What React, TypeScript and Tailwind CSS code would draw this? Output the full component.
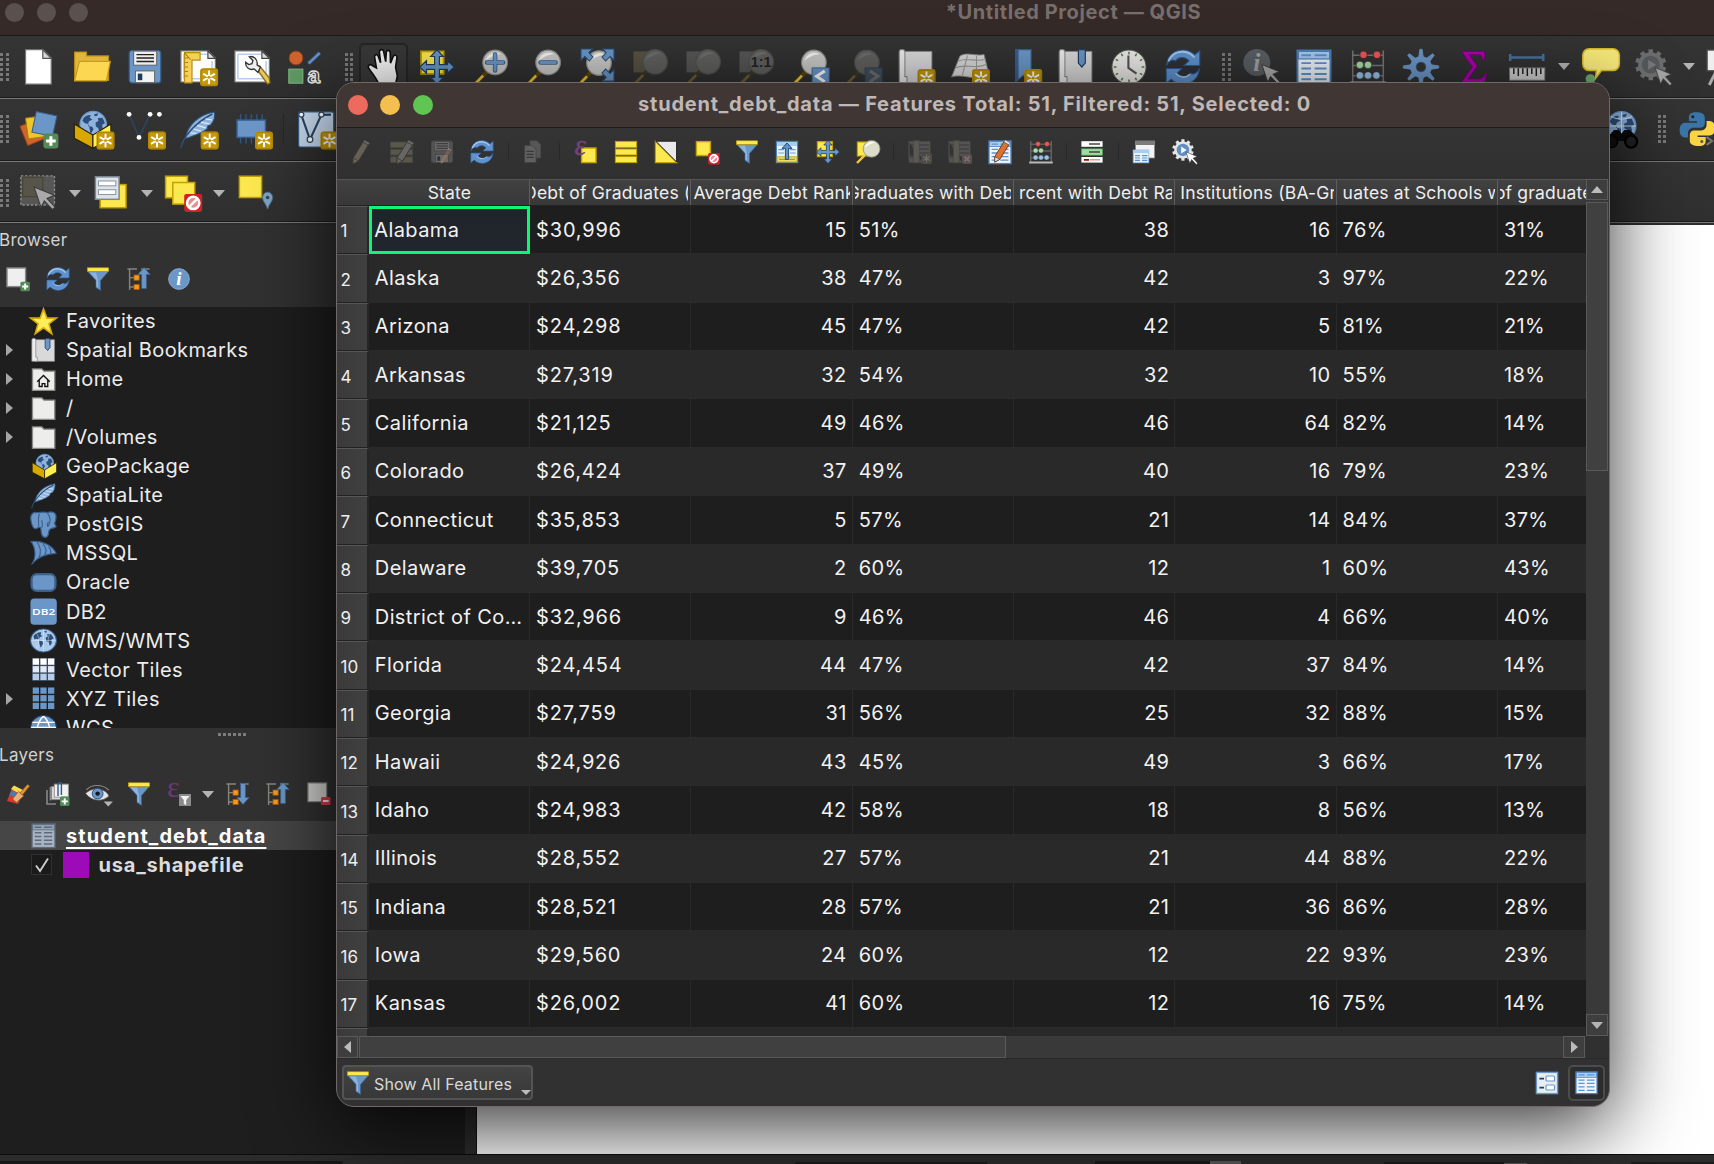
import React from 'react';

type Kids = { children?: React.ReactNode };

/* ---------- icon helpers ---------- */

const Svg = ({ s = 36, children, dim }: Kids & { s?: number; dim?: boolean }) => (
  <svg width={s} height={s} viewBox="0 0 24 24" className={dim ? 'shrink-0 overflow-visible opacity-30' : 'shrink-0 overflow-visible'}>
    {children}
  </svg>
);

const Badge = ({ x = 13, y = 13.5 }: { x?: number; y?: number }) => (
  <g transform={`translate(${x} ${y})`}>
    <rect width="12" height="12" rx="2" fill="#c59a0b" />
    <rect x=".6" y=".6" width="10.8" height="10.8" rx="1.6" fill="none" stroke="#a57e02" strokeWidth=".6" />
    <g stroke="#fff" strokeWidth="1.3" strokeLinecap="round">
      <path d="M6 2V10M2.5 4L9.5 8M9.5 4L2.5 8" />
    </g>
    <circle cx="6" cy="6" r="1" fill="#c59a0b" />
  </g>
);

const Plus = ({ x = 15, y = 15, s = 1 }: { x?: number; y?: number; s?: number }) => (
  <g transform={`translate(${x} ${y}) scale(${s})`}>
    <rect width="10" height="10" rx="1.6" fill="#548a57" />
    <path d="M5 1.8V8.2M1.8 5H8.2" stroke="#fff" strokeWidth="2" />
  </g>
);

const Forbid = ({ x = 13, y = 13, s = 1 }: { x?: number; y?: number; s?: number }) => (
  <g transform={`translate(${x} ${y}) scale(${s})`}>
    <rect width="12" height="12" rx="1.4" fill="#d11f2b" />
    <circle cx="6" cy="6" r="4.1" fill="#e88a8f" stroke="#fff" strokeWidth="1.7" />
    <path d="M3.3 8.7L8.7 3.3" stroke="#fff" strokeWidth="1.7" />
  </g>
);

const Cursor = ({ fill = '#a9a9a9', x = 0, y = 0, s = 1 }: { fill?: string; x?: number; y?: number; s?: number }) => (
  <path transform={`translate(${x} ${y}) scale(${s})`} d="M0 0L13.5 5.5L8.6 7.6L14 13.5L12.3 15L6.8 9.2L4.6 13.6Z" fill={fill} stroke="#3a3a3a" strokeWidth=".7" />
);

const Caret = () => <span className="h-0 w-0 border-x-[6px] border-t-[7px] border-x-transparent border-t-[#b4b4b4]" />;

/* ---------- icons ---------- */

const NewPage = () => (
  <Svg>
    <path d="M3.7.5H15.5L20.8 6V23.4H3.7Z" fill="#fff" stroke="#777" strokeWidth=".8" />
    <path d="M15.2.5V6.2H20.8Z" fill="#d6d6d6" stroke="#555" strokeWidth=".8" />
  </Svg>
);

const Folder = () => (
  <Svg>
    <path d="M.4 21V2H8.3V4.6H23V21Z" fill="#e0b73c" stroke="#b98c14" strokeWidth=".8" />
    <path d="M.4 21.2L3.6 8.2H24.2L21.6 21.2Z" fill="#fcd852" stroke="#c99a1c" strokeWidth=".8" />
  </Svg>
);

const Save = ({ s = 36, dim }: { s?: number; dim?: boolean }) => (
  <Svg s={s} dim={dim}>
    <rect x="1.5" y="1" width="21" height="21.6" rx="2" fill={dim ? '#a0a0a0' : '#6b97c8'} stroke={dim ? '#888' : '#395f8c'} strokeWidth=".8" />
    <rect x="4.4" y="1.4" width="15.4" height="9.4" fill="#eee" stroke="#666" strokeWidth=".7" />
    <path d="M6.3 3.7H18M6.3 6H18M6.3 8.3H18" stroke="#222" strokeWidth=".9" />
    <rect x="5.6" y="14.6" width="12.8" height="7.8" fill="#f3f3f3" stroke="#666" strokeWidth=".7" />
    <rect x="7.2" y="16.4" width="3" height="4.4" fill="#1d3b5c" />
  </Svg>
);

const LayoutPage = () => (
  <>
    <path d="M.6 1.3H18.8L23.6 6V22H.6Z" fill="#fff" stroke="#777" strokeWidth=".8" />
    <path d="M2.6 3.5H18M2.6 19.8H21.4M2.6 3.5V19.8M21.4 8V19.8" fill="none" stroke="#b7cdee" strokeWidth="1" />
    <path d="M18.6 1.3V6.2H23.6Z" fill="#ddd" stroke="#444" strokeWidth=".8" />
  </>
);

const NewLayout = () => (
  <Svg>
    <LayoutPage />
    <path d="M3 2.4H13.4V7.4H8V22.6H3Z" fill="#f6d156" stroke="#b98c14" strokeWidth=".8" />
    <path d="M3.4 6H5.4M3.4 9H5.4M3.4 12H5.4M3.4 15H5.4M3.4 18H5.4M7 7L3 2.6" stroke="#a57e02" strokeWidth=".7" />
    <Badge x={13.4} y={12.8} />
  </Svg>
);

const LayoutManager = () => (
  <Svg>
    <LayoutPage />
    <path d="M15 13L22.4 23.4L24 22.4L23.4 19.2L17.2 11.4Z" fill="#e9c85e" stroke="#8c6c14" strokeWidth=".9" />
    <path d="M7.8 8.8C7.4 12.5 10.6 14.4 13.4 13.3L16 15.6L17.6 12.2L15.4 10.6C16 7 13.2 4.4 10.2 5.2L12.6 7.6L12 9.8L9.8 10.4Z" fill="#eee" stroke="#333" strokeWidth=".9" />
  </Svg>
);

const StyleManager = () => (
  <Svg>
    <circle cx="6" cy="6" r="4.6" fill="#d0642e" stroke="#8c3d14" strokeWidth=".6" />
    <path d="M14.4 9.6L21.8 2.6" stroke="#395f8c" strokeWidth="2.6" />
    <path d="M14.4 9.6L21.8 2.6" stroke="#6b97c8" strokeWidth="1.4" />
    <rect x="1.2" y="13.4" width="9.4" height="9.4" fill="#5f9a63" stroke="#8ac18d" strokeWidth=".6" />
    <text x="13.6" y="22.6" fontFamily="Liberation Sans" fontWeight="700" fontSize="15" fill="#333" stroke="#e8e8e8" strokeWidth=".9">a</text>
  </Svg>
);

const Hand = () => (
  <Svg>
    <path d="M5.6 12.6L4.4 5.4C4.2 3.6 6.2 3.2 6.8 4.8L8.4 9.2L7.6 2C7.6.2 10-.2 10.4 1.6L11.8 8.4L12.2 2.2C12.4.4 14.6.6 14.8 2.4L15 9.4L16.8 5C17.6 3.4 19.6 4 19.3 5.8L18.4 12.2L19.6 18L17.8 26H8.2C7 21 2.8 16.6.4 12.6C-.4 10.8 1.6 9.8 2.8 11Z" transform="translate(2 0)" fill="#f4f4f4" stroke="#111" strokeWidth="1.1" />
  </Svg>
);

const Arrows4 = () => (
  <path d="M12 .5L16.2 5H13.6V10.4H19V7.8L23.5 12L19 16.2V13.6H13.6V19H16.2L12 23.5L7.8 19H10.4V13.6H5V16.2L.5 12L5 7.8V10.4H10.4V5H7.8Z" fill="#6b97c8" stroke="#1f3f63" strokeWidth=".8" />
);

const PanSel = ({ s = 36 }: { s?: number }) => (
  <Svg s={s}>
    <rect x="1.4" y="1.6" width="15" height="15" fill="#fce94f" stroke="#c4a000" strokeWidth="1.2" />
    <Arrows4 />
  </Svg>
);

const Lens = ({ cx = 15, cy = 9 }: { cx?: number; cy?: number }) => (
  <>
    <path d={`M${cx - 5.4} ${cy + 6.2}L${cx - 14.4} ${cy + 15.4}`} stroke="#5c4508" strokeWidth="2.6" />
    <path d={`M${cx - 8} ${cy + 8.8}L${cx - 14} ${cy + 15}`} stroke="#f3c847" strokeWidth="1.7" />
    <circle cx={cx} cy={cy} r="8.2" fill="#c9c9c7" stroke="#8f8f8c" strokeWidth=".8" />
    <path d={`M${cx - 6.4} ${cy - 1}A7 7 0 0 1 ${cx + 4} ${cy - 5.6}C${cx - 1} ${cy - 5} ${cx - 4} ${cy - 3} ${cx - 6.4} ${cy - 1}Z`} fill="#f5f5f3" />
  </>
);

const ZoomIn = () => (
  <Svg>
    <Lens cx={15.4} />
    <path d="M15.4 3.6V14.4M10 9H20.8" stroke="#395f8c" strokeWidth="3" strokeLinecap="round" />
    <path d="M15.4 3.8V14.2M10.2 9H20.6" stroke="#6b97c8" strokeWidth="1.9" strokeLinecap="round" />
  </Svg>
);
const ZoomOut = () => (
  <Svg>
    <Lens cx={15.4} />
    <path d="M10.4 9H20.4" stroke="#395f8c" strokeWidth="3" strokeLinecap="round" />
    <path d="M10.6 9H20.2" stroke="#6b97c8" strokeWidth="1.9" strokeLinecap="round" />
  </Svg>
);
const ZoomFull = () => (
  <Svg>
    <Lens cx={14} cy={9.4} />
    <g fill="#6b97c8" stroke="#2c4f7a" strokeWidth=".7">
      <path d="M2 0H9.6L7.2 2.4L10 5.4L7.6 8L4.6 5L2 7.6Z" />
      <path d="M24 0H16.4L18.8 2.4L16 5.4L18.4 8L21.4 5L24 7.6Z" />
      <path d="M24 21.4H16.4L18.8 19L16 16L18.4 13.4L21.4 16.4L24 13.8Z" />
    </g>
  </Svg>
);
const ZoomDim = ({ fill, label }: { fill: string; label?: string }) => (
  <Svg dim>
    <rect x="1" y="1.6" width="10" height="14" fill={fill} />
    <Lens cx={15.4} cy={8.6} />
    {label && <text x="15.4" y="12" textAnchor="middle" fontFamily="Liberation Sans" fontWeight="700" fontSize="9.6" fill="#000">{label}</text>}
  </Svg>
);
const ZoomStep = ({ dir, dim }: { dir: string; dim?: boolean }) => (
  <Svg dim={dim}>
    <Lens cx={14.6} />
    <rect x="13.4" y="12.6" width="11.4" height="11.4" fill="#6b97c8" stroke="#395f8c" strokeWidth=".6" />
    <path d={dir === 'left' ? 'M21.8 14.6L16.4 18.2L21.8 21.8' : 'M16.6 14.6L22 18.2L16.6 21.8'} fill="none" stroke="#fff" strokeWidth="2" />
  </Svg>
);

const MapSheet = () => (
  <>
    <path d="M4 1.6H22.6V22.4H4Z" fill="#d9d9d9" stroke="#8a8a8a" strokeWidth=".6" />
    <path d="M.8 2C.8-.2 4.6-.2 4.6 2V18.4H6V22.4H.8Z" fill="#ededed" stroke="#8a8a8a" strokeWidth=".7" />
  </>
);
const NewMap = () => (
  <Svg><MapSheet /><Badge x={13} y={13.4} /></Svg>
);
const New3D = () => (
  <Svg>
    <path d="M.4 18.6L6 4.6C11 1.6 17 5.2 22 3.6L25 16C20 23 8 16 .4 18.6Z" fill="#d9d9d9" stroke="#888" strokeWidth=".6" />
    <path d="M3 12.5C10 9.4 17 14 24 10M5 8C11 5 17 9.4 23 6.6M11 4.2L7.6 17.4M17 4.6V18" fill="none" stroke="#999" strokeWidth=".7" />
    <Badge x={14} y={13.4} />
  </Svg>
);
const NewBookmark = () => (
  <Svg>
    <path d="M7 .4H17.4V22L12.2 17.6L7 22Z" fill="#6b97c8" stroke="#395f8c" strokeWidth=".7" />
    <path d="M7 .4H9V20.4L7 22Z" fill="#395f8c" />
    <Badge x={12.8} y={13.4} />
  </Svg>
);
const Bookmarks = ({ s = 36 }: { s?: number }) => (
  <Svg s={s}>
    <MapSheet />
    <path d="M13.6.4H18.2V9.4L15.9 12L13.6 9.4Z" fill="#6b97c8" stroke="#1f3f63" strokeWidth=".8" />
  </Svg>
);
const Clock = () => (
  <Svg>
    <circle cx="12" cy="12" r="11.4" fill="#ecebe7" stroke="#555" strokeWidth=".7" />
    {Array.from({ length: 12 }, (_, i) => (
      <path key={i} d="M12 1.8V3.6" stroke="#4f7a4f" strokeWidth="1" transform={`rotate(${i * 30} 12 12)`} />
    ))}
    <path d="M11.6 4.4V12.6L17 16.4" fill="none" stroke="#555" strokeWidth="1.4" />
  </Svg>
);
const Refresh = ({ s = 36 }: { s?: number }) => (
  <Svg s={s}>
    <path d="M1 11C1.6 3.6 7 .6 12 .6C15.6.6 18 2 19.8 3.9L23.2 1.2V11H12.8L16 7.8C13 4.8 9 5.2 7 8C5 6.4 2.4 8 1 11Z" fill="#5f93cf" stroke="#2c5a92" strokeWidth=".7" />
    <path d="M2.4 8C4.4 3 9 1.6 12.4 1.8C15 2 17.4 3 19.6 5.6" fill="none" stroke="#a9c8ea" strokeWidth="1.3" />
    <g transform="rotate(180 12 12)">
      <path d="M1 11C1.6 3.6 7 .6 12 .6C15.6.6 18 2 19.8 3.9L23.2 1.2V11H12.8L16 7.8C13 4.8 9 5.2 7 8C5 6.4 2.4 8 1 11Z" fill="#5f93cf" stroke="#2c5a92" strokeWidth=".7" />
      <path d="M7.4 7.2C10 4.6 13.4 4.6 17 7.8" fill="none" stroke="#a9c8ea" strokeWidth="1" />
    </g>
  </Svg>
);
const Identify = () => (
  <Svg>
    <circle cx="9.2" cy="9" r="9" fill="#5a5f63" />
    <text x="9.2" y="14.6" textAnchor="middle" fontFamily="Liberation Serif" fontStyle="italic" fontWeight="700" fontSize="17" fill="#a3a3a3">i</text>
    <Cursor x={12.6} y={10.4} s={0.85} />
  </Svg>
);
const Table = ({ s = 36, dim, gray }: { s?: number; dim?: boolean; gray?: boolean }) => (
  <Svg s={s} dim={dim}>
    <rect x="1" y="1" width="22" height="22.6" fill={gray ? '#a9b4c0' : '#eef4fb'} stroke={gray ? '#5c6c7e' : '#4f82bd'} strokeWidth="1.3" />
    <rect x="1.6" y="1.6" width="20.8" height="5" fill={gray ? '#93a4b6' : '#a8cdf0'} stroke={gray ? '#5c6c7e' : '#4f82bd'} strokeWidth=".8" />
    <path d="M3.6 4.1H10M12.4 4.1H20.4M3.6 9.4H10M12.4 9.4H20.4M3.6 13H10M12.4 13H20.4M3.6 16.6H10M12.4 16.6H20.4M3.6 20.2H10M12.4 20.2H20.4" stroke={gray ? '#5c6c7e' : '#5f93cf'} strokeWidth="1.3" />
  </Svg>
);
const Abacus = ({ s = 36 }: { s?: number }) => (
  <Svg s={s}>
    <path d="M1.8 1V22M22.2 1V22M1.8 4.2H22.2M1.8 11H22.2M1.8 17.8H22.2" stroke="#777" strokeWidth="1" />
    <path d="M.2 22.6H23.8" stroke="#b9b9b9" strokeWidth="2" />
    <g strokeWidth=".4" stroke="#222">
      <circle cx="9" cy="3.9" r="2.5" fill="#ef5757" /><circle cx="18" cy="3.9" r="2.5" fill="#ef5757" />
      <circle cx="6.6" cy="10.6" r="2.5" fill="#a8dba8" /><circle cx="12" cy="10.6" r="2.5" fill="#a8dba8" />
      <circle cx="6.6" cy="17.6" r="2.5" fill="#9cc3e6" /><circle cx="12" cy="17.6" r="2.5" fill="#9cc3e6" /><circle cx="17.6" cy="17.6" r="2.5" fill="#9cc3e6" />
    </g>
  </Svg>
);
const GearBlue = () => (
  <Svg>
    {Array.from({ length: 8 }, (_, i) => (
      <path key={i} d="M10.4 6L11.3.2H12.7L13.6 6Z" fill="#6b97c8" stroke="#6b97c8" strokeWidth=".6" transform={`rotate(${i * 45} 12 12)`} />
    ))}
    <circle cx="12" cy="12" r="5.2" fill="none" stroke="#6b97c8" strokeWidth="4" />
    <circle cx="12" cy="12" r="3.2" fill="#333" stroke="#395f8c" strokeWidth=".5" />
  </Svg>
);
const Sigma = () => (
  <Svg>
    <path d="M4.4 1.6H19V7H17.8C17.4 4.4 16.4 3.6 14 3.6H8.6L14.2 11.4L8 20H14.6C17.4 20 18.6 19 19.4 16.4H20.4L19.4 22.4H4V21.4L11 12L4.4 2.6Z" fill="#b000b0" stroke="#76007a" strokeWidth=".6" />
  </Svg>
);
const Ruler = () => (
  <Svg>
    <path d="M.8 3.4V8M22.8 3.4V8M.8 5.7H22.8" stroke="#46729f" strokeWidth="1.7" />
    <rect x=".3" y="12.6" width="23.6" height="8.2" fill="#cfcfcf" stroke="#777" strokeWidth=".6" />
    <path d="M3.2 12.8V16.6M6.2 12.8V18M9.2 12.8V16.6M12.2 12.8V18M15.2 12.8V16.6M18.2 12.8V18M21.2 12.8V16.6" stroke="#222" strokeWidth="1" />
  </Svg>
);
const Tip = () => (
  <Svg>
    <circle cx="5.6" cy="20" r="3.2" fill="#6fa56f" />
    <path d="M4.9-.2H20.5C23-.2 24.9 1.8 24.9 4.2V10C24.9 12.4 23 14.4 20.5 14.4H13L9 19.6L9.6 14.4H4.9C2.4 14.4.5 12.4.5 10V4.2C.5 1.8 2.4-.2 4.9-.2Z" fill="#f7e97a" stroke="#d7b92b" strokeWidth="1" />
  </Svg>
);
const Gear = ({ s = 36, body, inner, cur, play }: { s?: number; body: string; inner: string; cur: string; play: string }) => (
  <Svg s={s}>
    {Array.from({ length: 10 }, (_, i) => (
      <rect key={i} x="9" y=".2" width="3" height="4" fill={body} transform={`rotate(${i * 36} 10.5 10.5)`} />
    ))}
    <circle cx="10.5" cy="10.5" r="8.4" fill={body} />
    <circle cx="10.5" cy="10.5" r="6" fill={inner} />
    <path d="M8.8 7.2L14 10.5L8.8 13.8Z" fill={play} />
    <Cursor x={13.4} y={12.4} s={0.8} fill={cur} />
  </Svg>
);
const Board = () => (
  <Svg>
    <rect x="0" y=".6" width="24" height="14" fill="#eee" stroke="#444" strokeWidth="1" />
    <path d="M6 15L1.5 24" stroke="#aaa" strokeWidth="2" />
  </Svg>
);

const AddLayers = () => (
  <Svg>
    <rect x="2" y="7" width="14" height="14" fill="#d0642e" stroke="#8c3d14" strokeWidth=".6" transform="rotate(-22 9 14)" />
    <rect x="4.6" y="3.8" width="14" height="14" fill="#f0c52c" stroke="#a57e02" strokeWidth=".6" transform="rotate(-8 11 11)" />
    <rect x="9.4" y="1.6" width="14" height="14" fill="#6b97c8" stroke="#395f8c" strokeWidth=".7" transform="rotate(12 16 8)" />
    <Plus x={15.6} y={15} />
  </Svg>
);
const Globe = ({ cx, cy, r }: { cx: number; cy: number; r: number }) => (
  <g transform={`translate(${cx} ${cy}) scale(${r / 9})`}>
    <circle r="9" fill="#8fb3dc" stroke="#6b97c8" strokeWidth=".8" />
    <path d="M-7.4-2.6C-6.4-5.4-4-6.6-1.6-6.4L-2.4-4.6L-.6-3.4L-3-2L-3.4-.4L-5.6-.8ZM-3.6 1L-.6 1.6L.2 3.2L-1.8 6.6L-3-.2ZM.6-7L3.4-7.6L2.8-6L1-5.6ZM3.2-4.4L6.4-4.6L8-1L6 .4L6.6 3L4.4 5.6L3.4 2.4L1.8 1.4L1.6-1.4L3.6-2.4Z" fill="#2c4f7a" />
  </g>
);
const GeoPackage = ({ s = 36, badge }: { s?: number; badge?: boolean }) => (
  <Svg s={s}>
    <Globe cx={12.8} cy={9} r={8.8} />
    <path d="M.2 8.6L12.6 16V24.8L.2 18.2Z" fill="#d8a800" stroke="#2b2200" strokeWidth=".8" />
    <path d="M24.6 8.6L12.6 16V24.8L24.6 18.2Z" fill="#fff04f" stroke="#2b2200" strokeWidth=".8" />
    {badge && <Badge x={15} y={13.6} />}
  </Svg>
);
const Shapefile = () => (
  <Svg>
    <path d="M1.4 2.2L8 17.6L15.4 2.2" fill="none" stroke="#2c4560" strokeWidth="1" />
    <circle cx="1.4" cy="2.2" r="1.6" fill="#fff" /><circle cx="15.4" cy="2.2" r="1.6" fill="#fff" /><circle cx="21.6" cy="2.2" r="1.6" fill="#fff" /><circle cx="8" cy="17.6" r="1.6" fill="#fff" />
    <Badge x={14} y={13.6} />
  </Svg>
);
const Feather = ({ s = 36, badge }: { s?: number; badge?: boolean }) => (
  <Svg s={s}>
    <path d="M3.6 18.4C5 9.6 12 2.4 23 .6C23.6 4 22.4 7 20.4 9.4L18.6 9.8L18 12C13.6 15.6 8.6 16.6 3.6 18.4Z" fill="#8fb3dc" stroke="#2c4f7a" strokeWidth=".7" />
    <path d="M.6 24.4C2 18 9 8.4 21.6 2" fill="none" stroke="#2c4f7a" strokeWidth="1" />
    <path d="M7 14.6L11 15M9 12L14 13.4M11.4 9.6L17 11.2M14 7.4L19.4 8.6M17 5.2L21.4 6" stroke="#dbe9f8" strokeWidth=".8" />
    {badge && <Badge x={13.8} y={13.6} />}
  </Svg>
);
const Chip = () => (
  <Svg>
    <path d="M4.4 2.2V21.6M8 2.2V21.6M11.6 2.2V21.6M15.2 2.2V21.6M18.8 2.2V21.6" stroke="#2f5580" strokeWidth="1" />
    <rect x="2" y="6" width="19" height="11.6" fill="#6b97c8" stroke="#395f8c" strokeWidth="1" />
    <Badge x={14} y={13.6} />
  </Svg>
);
const Virtual = () => (
  <Svg>
    <rect x=".4" y=".6" width="23.4" height="23.4" rx="1.4" fill="#c9dcf2" stroke="#395f8c" strokeWidth=".8" />
    <path d="M2.2 2.6L8 19L15.6 2.6L22 2.4" fill="none" stroke="#2c4560" strokeWidth="1.4" />
    <g fill="#fff" stroke="#2c4560" strokeWidth=".8"><circle cx="2.2" cy="2.4" r="1.7" /><circle cx="8" cy="19" r="1.9" /><circle cx="15.6" cy="2.4" r="1.7" /></g>
    <Badge x={15} y={13.6} />
  </Svg>
);
const MetaSearch = () => (
  <Svg>
    <Globe cx={13} cy={10} r={9.6} />
    <path d="M13 .4V20M3.6 10H22.6M6 3.6C10 6 16 6 20 3.6" stroke="#dbe9f8" strokeWidth=".6" fill="none" />
    <path d="M5 16L8 12.6H11L13 15L15 12.6H18.6L22 16V20H5Z" fill="#0a0a0a" />
    <circle cx="6.4" cy="20.4" r="4" fill="#111" stroke="#000" strokeWidth="1" /><circle cx="19.4" cy="20.4" r="4" fill="#222" stroke="#000" strokeWidth="1.6" />
  </Svg>
);
const Python = () => (
  <Svg>
    <path d="M11.4.8C7.4.8 6.6 2.4 6.6 4.2V6.8H12V7.8H4.2C1.6 7.8.4 10 .4 12.8C.4 15.8 2 17.6 4 17.6H6V14.8C6 12.8 7.6 11.2 9.6 11.2H14.4C16 11.2 17.2 9.8 17.2 8.4V4.2C17.2 2 14.8.8 11.4.8Z" fill="#3b76a8" />
    <path d="M13 23.4C17 23.4 17.8 21.8 17.8 20V17.4H12.4V16.4H20.2C22.8 16.4 24 14.2 24 11.4C24 8.4 22.4 6.6 20.4 6.6H18.4V9.4C18.4 11.4 16.8 13 14.8 13H10C8.4 13 7.2 14.4 7.2 15.8V20C7.2 22.2 9.6 23.4 13 23.4Z" fill="#fcd545" />
    <circle cx="9.2" cy="3.8" r="1" fill="#222" /><circle cx="15.2" cy="20.4" r="1" fill="#555" />
    <path d="M18.4 17.4L22 20L18.4 22.6" fill="none" stroke="#777" strokeWidth="1.4" />
  </Svg>
);

const SelectTool = () => (
  <Svg>
    <rect x=".6" y=".6" width="22.4" height="19.4" fill="#565656" stroke="#8d8d8d" strokeWidth=".9" strokeDasharray="1.6 1.2" />
    <rect x="1.8" y="1.4" width="13.4" height="13" fill="#57544a" stroke="#474433" strokeWidth=".8" />
    <Cursor x={9.4} y={8} s={1} />
  </Svg>
);
const SelectForm = () => (
  <Svg>
    <rect x="4.8" y="6.4" width="17.2" height="15.4" fill="#fce94f" stroke="#c4a000" strokeWidth="1" />
    <rect x="1.6" y="1.2" width="15.8" height="15" fill="#dfe3e8" stroke="#7c8794" strokeWidth="1" />
    <rect x="3.6" y="4" width="11.6" height="3.2" fill="#fff" stroke="#8b98a6" strokeWidth=".7" />
    <rect x="3.6" y="9.8" width="11.6" height="3.2" fill="#fff" stroke="#8b98a6" strokeWidth=".7" />
  </Svg>
);
const DeselectAll = () => (
  <Svg>
    <rect x=".4" y=".8" width="14.6" height="14.4" fill="#fce94f" stroke="#c4a000" strokeWidth="1" />
    <rect x="5.2" y="5" width="14.6" height="14.4" fill="#fce94f" stroke="#c4a000" strokeWidth="1" />
    <Forbid x={12.8} y={12.6} />
  </Svg>
);
const SelectLoc = () => (
  <Svg>
    <rect x="1.6" y=".8" width="14.8" height="14.2" fill="#fce94f" stroke="#c4a000" strokeWidth="1" />
    <path d="M20.4 22.8C19.4 19.2 17 17.6 17 15A3.4 3.6 0 0 1 23.8 15C23.8 17.6 21.4 19.2 20.4 22.8Z" fill="#7fa3c0" stroke="#456a88" strokeWidth=".6" />
    <circle cx="20.4" cy="15" r="1.2" fill="#2e4a60" />
  </Svg>
);

const Pencil = ({ x = 0, y = 0, s = 1, fill = '#e07030' }: { x?: number; y?: number; s?: number; fill?: string }) => (
  <g transform={`translate(${x} ${y}) scale(${s})`}>
    <path d="M4 18L14 2L19.4 5L9.6 21L4 24Z" fill={fill} stroke="#5c3b1e" strokeWidth="1" />
    <path d="M4 18L9.6 21L4 24Z" fill="#e8dcc8" stroke="#444" strokeWidth=".8" />
    <path d="M14 2L15.4 0L20.8 3L19.4 5Z" fill="#eee" stroke="#555" strokeWidth=".6" />
  </g>
);
const PencilDim = () => <Svg s={24} dim><Pencil fill="#d5cfa8" /></Svg>;
const MultiEdit = () => (
  <Svg s={24} dim>
    <path d="M.6 2H22.6V7.6H.6ZM.6 9.4H22.6V15H.6ZM.6 16.8H22.6V22.4H.6Z" fill="#b5ad7c" stroke="#777" strokeWidth=".8" />
    <Pencil x={3} fill="#ddd" />
  </Svg>
);
const SaveDim = () => (
  <div className="relative">
    <Save s={24} dim />
    <div className="absolute left-2 top-2 opacity-30"><svg width="16" height="16" viewBox="0 0 24 24"><Pencil fill="#c08060" /></svg></div>
  </div>
);
const Copy = () => (
  <Svg s={24} dim>
    <path d="M8 .8H15L18.6 4.4V18H8Z" fill="#aaa" stroke="#777" strokeWidth=".8" />
    <path d="M2.6 5.4H10L14 9.4V22.6H2.6Z" fill="#ccc" stroke="#666" strokeWidth=".8" />
    <path d="M4.6 11.4H11.8M4.6 14.4H11.8M4.6 17.4H11.8" stroke="#444" strokeWidth="1.2" />
  </Svg>
);
const SelExpr = () => (
  <Svg s={24}>
    <rect x="8.6" y="8" width="14.4" height="14.6" fill="#fce94f" stroke="#c4a000" strokeWidth="1.4" />
    <text x="1.4" y="15.4" fontFamily="Liberation Serif" fontStyle="italic" fontSize="29" fill="#77407d" stroke="#77407d" strokeWidth=".4">ε</text>
  </Svg>
);
const SelAll = () => (
  <Svg s={24}>
    {[1.4, 9, 16.6].map((y) => <rect key={y} x="1.4" y={y} width="21.2" height="6" fill="#fce94f" stroke="#c4a000" strokeWidth="1" />)}
  </Svg>
);
const Invert = () => (
  <Svg s={24}>
    <path d="M1.4 1.4V22.6H22.6Z" fill="#fce94f" stroke="#c4a000" strokeWidth="1.2" />
    <path d="M1.8 1.2H22.6V22Z" fill="#e9e9e9" stroke="#222" strokeWidth="1" />
  </Svg>
);
const Desel = () => (
  <Svg s={24}>
    <rect x="1.4" y="1.6" width="14" height="14" fill="#fce94f" stroke="#c4a000" strokeWidth="1.4" />
    <Forbid x={13.2} y={13} s={0.96} />
  </Svg>
);
const Funnel = ({ s = 24 }: { s?: number }) => (
  <Svg s={s}>
    <path d="M1.6 4.6H22.4L14.6 13.4V23.4L10 20.6V13.4Z" fill="#6b97c8" stroke="#395f8c" strokeWidth=".8" />
    <path d="M4 5.4H10L12 13V20.6L10.4 19.8V13.2Z" fill="#8fb3dc" />
    <rect x="1.4" y=".8" width="21.2" height="3.6" fill="#fce94f" stroke="#c4a000" strokeWidth=".6" />
  </Svg>
);
const MoveTop = () => (
  <Svg s={24}>
    <rect x="1.4" y="1.4" width="21.2" height="21.2" fill="#eaf2fb" stroke="#4f82bd" strokeWidth="1.2" />
    <rect x="2" y="2" width="20" height="4" fill="#a8cdf0" />
    <rect x="2" y="16.8" width="20" height="5.2" fill="#f3d95e" stroke="#c4a000" strokeWidth=".8" />
    <path d="M3.4 9.6H9M15 9.6H20.6M3.4 13H9M15 13H20.6M4 19.4H12M14 19.4H20" stroke="#6f9fd4" strokeWidth="1.2" />
    <path d="M12 3L17 8.4H13.6V19.4H10.4V8.4H7Z" fill="#5f93cf" stroke="#1f3f63" strokeWidth=".9" />
  </Svg>
);
const ZoomSel = () => (
  <Svg s={24}>
    <rect x="1.4" y="2" width="10" height="14" fill="#fce94f" stroke="#c4a000" strokeWidth="1.2" />
    <path d="M8.6 15.4L1 23" stroke="#f3c847" strokeWidth="2.4" />
    <circle cx="15.6" cy="8.8" r="8.4" fill="#dcdccb" stroke="#8f8f80" strokeWidth=".8" />
    <path d="M9 8A7 7 0 0 1 19 2.8C14 3.4 11.4 5.6 9 8Z" fill="#fff" />
  </Svg>
);
const FieldDim = ({ del }: { del?: boolean }) => (
  <Svg s={24} dim>
    <path d="M1 1.4H22V16H1ZM1 1.4V22.4H14" fill="#a0a0a0" stroke="#888" strokeWidth=".8" />
    <path d="M11 5H21M11 9H21M11 13H21M2 5H5M2 9H5M2 13H5M2 17H5" stroke="#444" strokeWidth="1.2" />
    <rect x="5.6" y=".8" width="5.6" height="22" fill="#b8b29c" stroke="#777" strokeWidth=".8" />
    {del ? (
      <g><rect x="14" y="14" width="10" height="10" rx="2" fill="#bb8f8f" /><path d="M16.4 16.4L21.6 21.6M21.6 16.4L16.4 21.6" stroke="#fff" strokeWidth="2" /></g>
    ) : (
      <g><rect x="13" y="13" width="11" height="11" rx="2" fill="#8a8468" /><path d="M18.5 14.6V22.4M15 16.4L22 20.6M22 16.4L15 20.6" stroke="#fff" strokeWidth="1.2" /></g>
    )}
  </Svg>
);
const EditTable = () => (
  <div className="relative">
    <Table s={24} />
    <div className="absolute left-1 top-0"><svg width="22" height="24" viewBox="0 0 24 24" className="overflow-visible"><Pencil x={-1} y={-1} /></svg></div>
  </div>
);
const CondFormat = () => (
  <Svg s={24}>
    <rect x="1.4" y="1.2" width="21.2" height="5.6" fill="#fff" /><rect x="1.4" y="8.8" width="21.2" height="6.4" fill="#9fdc9f" stroke="#4c9a4e" strokeWidth=".7" /><rect x="1.4" y="17" width="21.2" height="5.6" fill="#fff" />
    <path d="M9 4H20M9 12H20" stroke="#444" strokeWidth="1.6" /><path d="M4 19.8H9" stroke="#a00" strokeWidth="1.8" /><path d="M10 19.8H20" stroke="#f09090" strokeWidth="1.4" />
  </Svg>
);
const Dock = () => (
  <Svg s={24}>
    <rect x="3.6" y="1" width="19" height="17" fill="#f4f4f4" stroke="#888" strokeWidth=".8" />
    <rect x="3.6" y="1" width="19" height="4" fill="#7b7b7b" />
    <rect x="1.2" y="10" width="15.6" height="12.8" fill="#eaf2fb" stroke="#8fb3dc" strokeWidth=".8" />
    <rect x="1.2" y="10" width="15.6" height="3" fill="#a8cdf0" />
    <path d="M3 15.6H8M10 15.6H15.4M3 18H8M10 18H15.4M3 20.4H8M10 20.4H15.4" stroke="#5f93cf" strokeWidth="1.1" />
  </Svg>
);

const AddItem = () => (
  <Svg s={24}>
    <rect x="1" y="1" width="18.6" height="18.6" fill="#efefef" stroke="#888" strokeWidth="1.4" />
    <Plus x={14.4} y={14.8} s={0.95} />
  </Svg>
);
const TreeArrow = ({ down }: { down?: boolean }) => (
  <Svg s={24}>
    <path d="M.4 2H10M14 2H22.6M2.6 2V23M2.6 10.6H8M2.6 20H8" fill="none" stroke="#85857f" strokeWidth="1.4" />
    <rect x="7" y="8" width="5.2" height="5.2" fill="#f59a20" stroke="#a85a00" strokeWidth=".8" />
    <rect x="7" y="17.4" width="5.2" height="5.2" fill="#f59a20" stroke="#a85a00" strokeWidth=".8" />
    {down
      ? <path d="M17 22.4L10.8 15.4H14.6V1.4H19.4V15.4H23.2Z" fill="#6b97c8" stroke="#395f8c" strokeWidth=".8" />
      : <path d="M17 .6L10.8 7.6H14.6V21.6H19.4V7.6H23.2Z" fill="#6b97c8" stroke="#395f8c" strokeWidth=".8" />}
  </Svg>
);
const Info = () => (
  <Svg s={24}>
    <circle cx="12" cy="12" r="10.4" fill="#6b97c8" stroke="#8fb3dc" strokeWidth=".8" />
    <text x="12" y="18" textAnchor="middle" fontFamily="Liberation Serif" fontStyle="italic" fontWeight="700" fontSize="19" fill="#fff">i</text>
  </Svg>
);

const Star = () => (
  <Svg s={27}>
    <path d="M12 .8L15 9H23.4L16.8 14L19.4 23L12 17.6L4.6 23L7.2 14L.6 9H9Z" fill="#fcee58" stroke="#d4a90c" strokeWidth="1.4" />
  </Svg>
);
const Dir = ({ home }: { home?: boolean }) => (
  <Svg s={27}>
    <path d="M2.2 2.6H10.4L12.4 4.6H22V21.6H2.2Z" fill="#ededeb" stroke="#8b8b88" strokeWidth="1.2" />
    {home && <path d="M6.4 14L12 8.4L17.6 14M8.2 12.6V18.2H10.8V15.6H13.2V18.2H15.8V12.6" fill="none" stroke="#111" strokeWidth="1.2" />}
  </Svg>
);
const Elephant = () => (
  <Svg s={27}>
    <path d="M6 1.4C2 .4.2 4 .8 8C1.4 12 3 15.8 5 15.8C6.4 15.8 6.8 14.6 8.4 14.4C9.4 14.4 9.8 15 9.8 17C10 21 11 23.4 13.4 23.4C16 23.4 16.4 21.4 16.6 18.6C17 14.4 21 16 23 14C24 13 21.8 12.4 21.8 11C23 8 24 4 22 2C20 .2 17 .8 15.4 1.4C12.4.4 9 1.4 6 1.4Z" fill="#6b97c8" stroke="#395f8c" strokeWidth="1.1" />
    <path d="M8.6 2.6C6.6 5 8 9 7.6 13.6M15.4 1.6C18.4 5 18.6 10 16.4 13C15.4 15 15 12 16.4 9.6M10.6 8C10.2 10 12 13 10.4 15" fill="none" stroke="#395f8c" strokeWidth="1" />
  </Svg>
);
const Sail = () => (
  <Svg s={27}>
    <path d="M1 1.4C10 .6 20 4 23.2 12C16 12 8 14 1.4 21.6C6 16 5 7 1 1.4Z" fill="#6b97c8" stroke="#395f8c" strokeWidth="1" />
    <path d="M6.4 2C10 7 10 12 7.6 16.4M11.6 3.2C14.6 7 14.6 11 13 13.6M16.6 5.8C18.6 8 18.8 10.4 18 12.4" fill="none" stroke="#395f8c" strokeWidth="1" />
  </Svg>
);
const Oracle = () => (
  <Svg s={27}><rect x="1.4" y="4.6" width="21.2" height="14.8" rx="4.6" fill="#6b97c8" stroke="#3d5f88" strokeWidth="2" /></Svg>
);
const Db2 = () => (
  <Svg s={27}>
    <rect x=".4" y=".4" width="23.4" height="23.4" rx="3.4" fill="#6b97c8" />
    <text x="12.1" y="14.8" textAnchor="middle" fontFamily="Open Sans" fontWeight="600" fontSize="8" textLength="20.6" lengthAdjust="spacingAndGlyphs" fill="#fff">DB2</text>
  </Svg>
);
const GlobeIcon = () => (
  <Svg s={27}>
    <ellipse cx="12" cy="12" rx="11.4" ry="10.2" fill="#a9c8ea" stroke="#395f8c" strokeWidth="1" />
    <path d="M3 8.4C4.6 5.4 7 4.4 10 4.6L9.4 7L11 8L8.6 9.4L8 11L5.6 10.4L4 11ZM8 12L11 12.6L11.6 14.6L9.6 18.4L8.4 15ZM12.4 4L15 3.4L14.4 5.4ZM15 6.6L18.4 6L21.2 10L19 11.4L19.4 14.4L17.4 17L16.4 13.4L14.4 12.4L14 9.4L16 8.4Z" fill="#2c4f7a" />
    <path d="M5.6 5.4C8.6 9 8.6 15 5.6 18.6M12 2V22M18.4 5.4C15.4 9 15.4 15 18.4 18.6M1 12H23" fill="none" stroke="#e4eefa" strokeWidth=".4" />
  </Svg>
);
const Wcs = () => (
  <Svg s={27}>
    <ellipse cx="12" cy="12" rx="11.4" ry="10.6" fill="#6b97c8" stroke="#1f3f63" strokeWidth="1" />
    <path d="M2 7.4H22M1 12H23M12 2C7 6 6 12 6 22M12 2C17 6 18 12 18 22" fill="none" stroke="#fff" strokeWidth="1.2" />
  </Svg>
);
const Tiles = ({ light }: { light?: boolean }) => (
  <Svg s={27}>
    {light && <rect x="1.8" y="1.8" width="20.4" height="20.4" fill="#3b4a5e" />}
    {[0, 1, 2].map((r) => [0, 1, 2].map((c) => (
      <rect key={`${r}${c}`} x={2.4 + c * 6.8} y={2.2 + r * 6.8} width="5.6" height="5.6" fill={light ? ['#fff', '#e3e9f5', '#b9cdea'][r] : '#6b97c8'} />
    )))}
  </Svg>
);

const StyleBrush = () => (
  <Svg s={24}>
    <path d="M1 19L7 4L18 10L12 22Z" fill="#d63a2c" />
    <path d="M5 7L8 3.6L17 8L14 12Z" fill="#f4dc4a" /><path d="M3.6 13L5.4 8L13 12.6L11 16Z" fill="#4c78b4" />
    <path d="M10.4 20.4L6.6 17L12.6 9.4L17.6 14Z" fill="#e9b27a" stroke="#8c5a24" strokeWidth=".7" />
    <path d="M14 11L21.6 2.4L23.6 4L16.4 13Z" fill="#e8962f" stroke="#8c5a24" strokeWidth=".7" />
  </Svg>
);
const AddGroup = () => (
  <Svg s={24}>
    <path d="M1 8V22H10M4.4 5V18.6" fill="none" stroke="#888" strokeWidth="1.6" />
    <rect x="5.4" y="4.6" width="13" height="13" fill="#d7d7d7" stroke="#888" strokeWidth="1" /><rect x="8.4" y="2.2" width="14" height="13" fill="#f2f2f2" stroke="#999" strokeWidth="1" />
    <path d="M12 14V3C12-.4 15.4-.4 15.4 3V13" fill="none" stroke="#2c5a92" strokeWidth="1.4" />
    <Plus x={14} y={14.6} s={0.95} />
  </Svg>
);
const Eye = () => (
  <Svg s={24}>
    <path d="M-.4 11.6C4 6 18 4 23 14C17 20 6 20 -.4 11.6Z" fill="#e4e4e4" stroke="#555" strokeWidth=".8" />
    <path d="M.4 8C5 2 17 2 22.6 8" fill="none" stroke="#888" strokeWidth="1.2" />
    <circle cx="11.6" cy="11.6" r="5.4" fill="#6b97c8" stroke="#2c4f7a" strokeWidth="1" /><circle cx="11.6" cy="11.6" r="2.2" fill="#101820" />
    <path d="M17.6 19.6H27L22.3 24.4Z" fill="#b4b4b4" />
  </Svg>
);
const ExprFilter = () => (
  <Svg s={24}>
    <text x="0" y="14.6" fontFamily="Liberation Serif" fontSize="30" fill="#6b3a72">ε</text>
    <rect x="12" y="12" width="12" height="12" fill="#8b8b8b" />
    <path d="M13.4 14H22.6L19.2 18V23L16.8 22V18Z" fill="#f2f2f2" />
  </Svg>
);
const Remove = () => (
  <Svg s={24}>
    <rect x="1" y="1" width="18.6" height="18.6" fill="#d3d3d1" stroke="#8b8b88" strokeWidth="1.2" />
    <rect x="14" y="15" width="9.6" height="8" rx="1.6" fill="#d6404a" /><path d="M16 19H21.6" stroke="#fff" strokeWidth="1.8" />
  </Svg>
);
const FormView = () => (
  <Svg s={24}>
    <rect x="1.4" y="1.4" width="21.2" height="21.2" fill="#e8edf3" stroke="#6b97c8" strokeWidth="1.4" />
    <path d="M4.4 7.6H9M4.4 16.6H9" stroke="#1f3f63" strokeWidth="1.8" />
    <rect x="11" y="5" width="8.6" height="5" rx="1" fill="#fff" stroke="#6b97c8" strokeWidth="1.2" /><rect x="11" y="14" width="8.6" height="5" rx="1" fill="#fff" stroke="#6b97c8" strokeWidth="1.2" />
  </Svg>
);

/* ---------- layout pieces ---------- */

const Slot = ({ children }: Kids) => <div className="flex w-[53.3px] shrink-0 items-center justify-center">{children}</div>;
const MiniSlot = ({ children }: Kids) => <div className="flex w-[40.35px] shrink-0 items-center justify-center">{children}</div>;
const MiniSep = () => <div className="flex w-[11.3px] shrink-0 justify-center"><div className="h-[18px] w-px bg-[#282828]" /></div>;

const Dots = () => (
  <div className="grid w-[9px] grid-cols-2 gap-x-[2px] gap-y-[2px]">
    {Array.from({ length: 12 }, (_, i) => <span key={i} className="h-[3px] w-[3px] bg-[#797979]" />)}
  </div>
);

const ArrowSlot = () => <div className="flex w-[19px] shrink-0 justify-center"><Caret /></div>;

const bar = 'flex shrink-0 items-center overflow-hidden border-b border-[#7a7a7a] bg-gradient-to-b from-[#343434] to-[#2f2f2f] shadow-[inset_0_-1px_0_#1c1c1c]';

const browser: [string, React.ReactNode, boolean][] = [
  ['Favorites', <Star />, false],
  ['Spatial Bookmarks', <Bookmarks s={25} />, true],
  ['Home', <Dir home />, true],
  ['/', <Dir />, true],
  ['/Volumes', <Dir />, true],
  ['GeoPackage', <GeoPackage s={24} />, false],
  ['SpatiaLite', <Feather s={25} />, false],
  ['PostGIS', <Elephant />, false],
  ['MSSQL', <Sail />, false],
  ['Oracle', <Oracle />, false],
  ['DB2', <Db2 />, false],
  ['WMS/WMTS', <GlobeIcon />, false],
  ['Vector Tiles', <Tiles light />, false],
  ['XYZ Tiles', <Tiles />, true],
  ['WCS', <Wcs />, false],
];

const rows: string[][] = [
  ['Alabama', '$30,996', '15', '51%', '38', '16', '76%', '31%'],
  ['Alaska', '$26,356', '38', '47%', '42', '3', '97%', '22%'],
  ['Arizona', '$24,298', '45', '47%', '42', '5', '81%', '21%'],
  ['Arkansas', '$27,319', '32', '54%', '32', '10', '55%', '18%'],
  ['California', '$21,125', '49', '46%', '46', '64', '82%', '14%'],
  ['Colorado', '$26,424', '37', '49%', '40', '16', '79%', '23%'],
  ['Connecticut', '$35,853', '5', '57%', '21', '14', '84%', '37%'],
  ['Delaware', '$39,705', '2', '60%', '12', '1', '60%', '43%'],
  ['District of Co…', '$32,966', '9', '46%', '46', '4', '66%', '40%'],
  ['Florida', '$24,454', '44', '47%', '42', '37', '84%', '14%'],
  ['Georgia', '$27,759', '31', '56%', '25', '32', '88%', '15%'],
  ['Hawaii', '$24,926', '43', '45%', '49', '3', '66%', '17%'],
  ['Idaho', '$24,983', '42', '58%', '18', '8', '56%', '13%'],
  ['Illinois', '$28,552', '27', '57%', '21', '44', '88%', '22%'],
  ['Indiana', '$28,521', '28', '57%', '21', '36', '86%', '28%'],
  ['Iowa', '$29,560', '24', '60%', '12', '22', '93%', '23%'],
  ['Kansas', '$26,002', '41', '60%', '12', '16', '75%', '14%'],
  ['', '', '', '', '', '', '', ''],
];

const heads: [string, string][] = [
  ['State', 'w-full pl-px text-center'],
  ['Debt of Graduates (', '-ml-[8px]'],
  ['Average Debt Rank', 'ml-0'],
  ['Graduates with Deb', '-ml-[8px]'],
  ['rcent with Debt Ra', 'ml-[3px]'],
  ['Institutions (BA-Gr', 'ml-[3px]'],
  ['uates at Schools w', 'ml-[4px]'],
  ['of graduates', '-ml-[5px]'],
];

const btn = 'border border-[#5a5a5a] bg-[#3e3e3e] flex items-center justify-center shrink-0';

function Dialog() {
  return (
    <div className="absolute left-[336px] top-[82px] flex h-[1025px] w-[1274px] flex-col overflow-hidden rounded-[18px] border border-[#6f6967] bg-[#313131] shadow-[0_20px_80px_rgba(0,0,0,0.8)]">
      <div className="flex h-[45px] shrink-0 items-center border-b border-[#1c1c1c] bg-[#403735]">
        <div className="flex w-[110px] gap-[12.3px] pb-px pl-[11px]">
          <span className="h-5 w-5 rounded-full bg-[#ed6a5e]" />
          <span className="h-5 w-5 rounded-full bg-[#f5bf4f]" />
          <span className="h-5 w-5 rounded-full bg-[#61c554]" />
        </div>
        <div className="flex-1 whitespace-nowrap pb-[2px] pr-[107px] text-center text-[20px] font-bold tracking-[0.78px] text-[#bfb8b6]">
          student_debt_data — Features Total: 51, Filtered: 51, Selected: 0
        </div>
      </div>
      <div className="flex h-[51px] shrink-0 items-center bg-gradient-to-b from-[#343434] to-[#303030] pb-[4px] pl-[4px]">
        <MiniSlot><PencilDim /></MiniSlot><MiniSlot><MultiEdit /></MiniSlot><MiniSlot><SaveDim /></MiniSlot><MiniSlot><Refresh s={24} /></MiniSlot>
        <MiniSep /><MiniSlot><Copy /></MiniSlot><MiniSep />
        <MiniSlot><SelExpr /></MiniSlot><MiniSlot><SelAll /></MiniSlot><MiniSlot><Invert /></MiniSlot><MiniSlot><Desel /></MiniSlot><MiniSlot><Funnel /></MiniSlot><MiniSlot><MoveTop /></MiniSlot><MiniSlot><PanSel s={24} /></MiniSlot><MiniSlot><ZoomSel /></MiniSlot>
        <MiniSep /><MiniSlot><FieldDim /></MiniSlot><MiniSlot><FieldDim del /></MiniSlot><MiniSlot><EditTable /></MiniSlot><MiniSlot><Abacus s={24} /></MiniSlot>
        <MiniSep /><MiniSlot><CondFormat /></MiniSlot>
        <MiniSep /><MiniSlot><Dock /></MiniSlot><MiniSlot><Gear s={25} body="#e6e6e6" inner="#5f8fc4" play="#fff" cur="#fff" /></MiniSlot>
      </div>
      <div className="flex h-[857px] shrink-0">
        <div className="flex w-[1249px] shrink-0 flex-col overflow-hidden">
          <div className="flex h-[27px] shrink-0 border-b border-t border-b-[#222] border-t-[#555] bg-gradient-to-b from-[#414141] to-[#383838]">
            <div className="w-[31.8px] shrink-0" />
            {heads.map(([t, c], i) => (
              <div key={i} className="flex w-[161.3px] shrink-0 items-center border-r border-[#5e5e5e] px-[2px]">
                <div className="w-full overflow-hidden">
                  <div className={`${c} whitespace-nowrap text-[17.5px] leading-[24px] tracking-[0.2px] text-[#eee]`}>{t}</div>
                </div>
              </div>
            ))}
          </div>
          <div className="h-[830px] overflow-hidden">
            {rows.map((r, i) => (
              <div key={i} className={`flex h-[48.36px] ${i % 2 ? 'bg-[#292929]' : 'bg-[#1e1e1e]'}`}>
                <div className="flex w-[31.8px] shrink-0 items-center border-b border-r-2 border-t border-b-[#222] border-r-[#262626] border-t-[#565656] bg-gradient-to-r from-[#3a3a3a] to-[#404040] pl-[3.5px] pt-[4px] text-[17px] text-[#eee]">
                  {i < 17 ? i + 1 : ''}
                </div>
                {r.map((c, j) => {
                  const right = j === 2 || j === 4 || j === 5;
                  const sel = i === 0 && j === 0;
                  return (
                    <div
                      key={j}
                      className={`flex w-[161.3px] shrink-0 items-center whitespace-nowrap text-[20px] text-[#f2f2f2] ${
                        j === 1 ? 'tracking-[0.8px]' : 'tracking-[0.4px]'
                      } ${right ? 'justify-end pr-[5px]' : ''} ${
                        sel ? 'border-[3px] border-[#0cf574] bg-gradient-to-b from-[#1f2429] to-[#22262e] pb-px pl-[2.5px]' : 'border-b border-r border-[#2a2a2a]'
                      } ${!right && !sel ? 'pl-[6px]' : ''}`}
                    >
                      {c}
                    </div>
                  );
                })}
              </div>
            ))}
          </div>
        </div>
        <div className="flex w-[23px] flex-col bg-[#393939]">
          <div className={`${btn} h-[21px] w-[22px]`}><span className="border-x-[6px] border-b-[7px] border-x-transparent border-b-[#bbb]" /></div>
          <div className="mt-[2px] h-[269px] w-[22px] border border-[#5a5a5a] bg-[#404040]" />
          <div className="flex-1" />
          <div className={`${btn} h-[22px] w-[22px]`}><Caret /></div>
        </div>
      </div>
      <div className="flex h-[22px] shrink-0 bg-[#393939]">
        <div className={`${btn} h-[22px] w-[21px]`}><span className="border-y-[6px] border-r-[7px] border-y-transparent border-r-[#bbb]" /></div>
        <div className="ml-px h-[22px] w-[647px] border border-[#5a5a5a] bg-[#404040]" />
        <div className="flex-1" />
        <div className={`${btn} h-[22px] w-[22px]`}><span className="border-y-[6px] border-l-[7px] border-y-transparent border-l-[#bbb]" /></div>
        <div className="w-[24px] bg-[#303030]" />
      </div>
      <div className="flex flex-1 items-center border-t border-[#292929] pl-[5px] pr-[4px]">
        <div className="flex h-[35px] w-[191px] items-center rounded-[4px] border-2 border-[#545454] bg-gradient-to-b from-[#434343] to-[#383838] pl-[2px]">
          <Funnel />
          <span className="ml-[4px] flex-1 whitespace-nowrap pt-[2px] text-[16px] tracking-[0.15px] text-[#d8d8d8]">Show All Features</span>
          <span className="mt-[20px] border-x-[5px] border-t-[5px] border-x-transparent border-t-[#bbb]" />
        </div>
        <div className="flex-1" />
        <FormView />
        <div className="ml-[9px] flex h-[36px] w-[37px] items-center justify-center rounded-[5px] border-2 border-[#4c4c4c] bg-[#2c2c2c]"><Table s={23} /></div>
      </div>
    </div>
  );
}

export default function App() {
  return (
    <div className="relative h-[1164px] w-[1714px] overflow-hidden bg-[#2d2d2d] [font-family:Inter,'Liberation_Sans',sans-serif]">
      <div className="flex h-full flex-col">
        <div className="flex h-[36px] shrink-0 border-b border-[#1b1b1b] bg-[#352a28]">
          <div className="flex w-[334px] gap-[13px] pl-[5px] pt-[3px]">
            <span className="h-[19px] w-[19px] rounded-full bg-[#5a504e]" />
            <span className="h-[19px] w-[19px] rounded-full bg-[#5a504e]" />
            <span className="h-[19px] w-[19px] rounded-full bg-[#5a504e]" />
          </div>
          <div className="h-[24px] flex-1 pl-[99px] text-center text-[20px] font-bold leading-[25px] tracking-[0.6px] text-[#786f6d]">*Untitled Project — QGIS</div>
        </div>

        <div className={`${bar} h-[63px] pb-px`}>
          <div className="flex w-[11.8px] shrink-0 items-center"><Dots /></div>
          <Slot><NewPage /></Slot><Slot><Folder /></Slot><Slot><Save /></Slot><Slot><NewLayout /></Slot><Slot><LayoutManager /></Slot><Slot><StyleManager /></Slot>
          <div className="flex w-[25px] shrink-0 justify-center pl-[10px]"><Dots /></div>
          <Slot><div className="flex h-[48px] w-[49px] items-center justify-center rounded-[5px] border-2 border-[#262626] bg-[#383838]"><Hand /></div></Slot>
          <Slot><PanSel /></Slot><Slot><ZoomIn /></Slot><Slot><ZoomOut /></Slot><Slot><ZoomFull /></Slot>
          <Slot><ZoomDim fill="#b0a060" /></Slot><Slot><ZoomDim fill="#aaa" /></Slot><Slot><ZoomDim fill="#aaa" label="1:1" /></Slot>
          <Slot><ZoomStep dir="left" /></Slot><Slot><ZoomStep dir="right" dim /></Slot>
          <Slot><NewMap /></Slot><Slot><New3D /></Slot><Slot><NewBookmark /></Slot><Slot><Bookmarks /></Slot><Slot><Clock /></Slot><Slot><Refresh /></Slot>
          <div className="flex w-[25px] shrink-0 justify-center pl-[10px]"><Dots /></div>
          <Slot><Identify /></Slot><Slot><Table /></Slot><Slot><Abacus /></Slot><Slot><GearBlue /></Slot><Slot><Sigma /></Slot><Slot><Ruler /></Slot><ArrowSlot />
          <Slot><Tip /></Slot><Slot><Gear body="#6d6d6d" inner="#55585b" play="#777" cur="#a3a3a3" /></Slot><ArrowSlot /><Slot><Board /></Slot>
        </div>

        <div className={`${bar} h-[63px] pb-[2px]`}>
          <div className="flex w-[11.8px] shrink-0 items-center"><Dots /></div>
          <Slot><AddLayers /></Slot><Slot><GeoPackage badge /></Slot><Slot><Shapefile /></Slot><Slot><Feather badge /></Slot><Slot><Chip /></Slot>
          <div className="flex w-[11px] shrink-0 justify-center"><div className="h-[30px] w-px bg-[#282828]" /></div>
          <Slot><Virtual /></Slot>
          <div className="flex-1" />
          <Slot><MetaSearch /></Slot>
          <div className="flex w-[24.5px] shrink-0 justify-center pl-[8px]"><Dots /></div>
          <div className="-mr-[10px]"><Slot><Python /></Slot></div>
        </div>

        <div className={`${bar} h-[61px] pt-[2px]`}>
          <div className="flex w-[11.8px] shrink-0 items-center"><Dots /></div>
          <Slot><SelectTool /></Slot><ArrowSlot /><Slot><SelectForm /></Slot><ArrowSlot /><Slot><DeselectAll /></Slot><ArrowSlot /><Slot><SelectLoc /></Slot>
        </div>

        <div className="flex h-[931px] shrink-0 pt-[2px]">
          <div className="flex w-[465px] shrink-0 flex-col bg-[#313131]">
            <div className="h-[31px] pt-[2.5px] text-[17px] leading-[24px] tracking-[0.3px] text-[#d2d2d2]"><span className="-ml-px">Browser</span></div>
            <div className="flex h-[50.5px] items-center pb-[4.5px] pl-[5.5px]">
              <div className="flex gap-[16.4px]"><AddItem /><Refresh s={24} /><Funnel /><TreeArrow /><Info /></div>
            </div>
            <div className="h-[421.5px] overflow-hidden bg-[#1e1e1e]">
              {browser.map(([t, icon, exp]) => (
                <div key={t} className="flex h-[29.05px] items-center">
                  <div className="w-[30px] shrink-0 pl-[6px]">{exp && <span className="block h-0 w-0 border-y-[6.5px] border-l-[7.5px] border-y-transparent border-l-[#a6a6a6]" />}</div>
                  <div className="flex w-[27px] shrink-0 items-center justify-center">{icon}</div>
                  <div className="pl-[9px] text-[20px] tracking-[0.4px] text-[#ececec]">{t}</div>
                </div>
              ))}
            </div>
            <div className="flex h-[13px] items-center pb-px pl-[217.5px]">
              <div className="flex gap-[2px]">{[0, 1, 2, 3, 4, 5].map((i) => <span key={i} className="h-[3px] w-[3px] bg-[#7d7d7d]" />)}</div>
            </div>
            <div className="h-[27px] pt-[2.5px] text-[17px] leading-[22px] tracking-[0.3px] text-[#d2d2d2]"><span className="-ml-px">Layers</span></div>
            <div className="flex h-[53px] items-center pb-px pl-[5.5px]">
              <div className="flex items-center gap-[16.4px]"><StyleBrush /><AddGroup /><Eye /><Funnel /><ExprFilter /></div>
              <div className="flex w-[35px] justify-center pr-[2px]"><Caret /></div>
              <div className="flex gap-[16.4px]"><TreeArrow down /><TreeArrow /><Remove /></div>
            </div>
            <div className="flex flex-1 flex-col bg-[#1e1e1e]">
              <div className="flex h-[29.3px] items-center bg-[#464646] pl-[31px]">
                <Table s={25} gray />
                <div className="pl-[10px] text-[20px] font-bold tracking-[1.08px] text-white underline decoration-2 underline-offset-[4px]">student_debt_data</div>
              </div>
              <div className="flex h-[29px] items-center pl-[31px]">
                <div className="flex h-[21px] w-[21px] items-center justify-center border border-[#303030] bg-[#1a1a1a]">
                  <svg width="16" height="16" viewBox="0 0 16 16"><path d="M2 8.5L6 14L14 1.5" fill="none" stroke="#ccc" strokeWidth="1.9" /></svg>
                </div>
                <div className="ml-[11px] h-[26px] w-[26px] bg-[#9d0bb8]" />
                <div className="pl-[9.5px] text-[20px] font-bold tracking-[0.8px] text-[#dcdcdc]">usa_shapefile</div>
              </div>
            </div>
          </div>
          <div className="w-[12px] shrink-0 border-r border-[#111] bg-[#2d2d2d]" />
          <div className="flex-1 bg-white" />
        </div>
        <div className="flex flex-1 items-end border-t border-[#0c0c0c] bg-[#2c2c2c]">
          <div className="h-[3px] w-[343px] shrink-0 rounded-tr-[4px] bg-[#181818]" />
          <div className="ml-[452px] h-[2px] w-[192px] shrink-0 bg-[#1b1b1b]" />
          <div className="ml-[108px] h-[3px] w-[115px] shrink-0 bg-[#191919]" />
          <div className="h-[3px] w-[31px] shrink-0 bg-[#5a5a5a]" />
          <div className="ml-[143px] h-[2px] w-[120px] shrink-0 bg-[#1b1b1b]" />
          <div className="h-px w-[23px] shrink-0 bg-[#5a5a5a]" />
          <div className="ml-[104px] h-[2px] flex-1 bg-[#1b1b1b]" />
        </div>
      </div>
      <Dialog />
    </div>
  );
}
